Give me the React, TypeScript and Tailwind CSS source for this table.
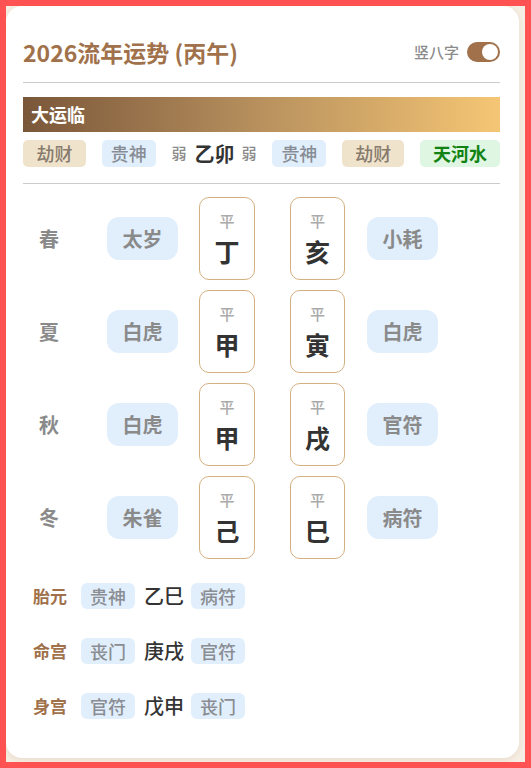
import React from "react";

const F = { fontFamily: '"Noto Sans CJK SC", "Noto Sans", sans-serif' };

function Card({ ch }: { ch: string }) {
  return (
    <div className="flex h-[83px] flex-col items-center rounded-[10px] border border-[#d3b07f] bg-white pt-[13px]">
      <div className="text-[15px] leading-[20px] font-medium text-[#aaaaaa]">平</div>
      <div className="mt-[5px] text-[25px] leading-[30px] font-bold text-[#333333]">{ch}</div>
    </div>
  );
}

function STag({ t }: { t: string }) {
  return (
    <div className="flex h-[43px] w-[71px] items-center justify-center rounded-[12px] bg-[#e1effd] text-[20px] font-bold text-[#8a8a8a]">
      {t}
    </div>
  );
}

function BTag({ t }: { t: string }) {
  return (
    <div className="flex h-[26px] w-[54px] items-center justify-center rounded-[6px] bg-[#e1effd] text-[18px] font-medium text-[#8a8d92]">
      {t}
    </div>
  );
}

export default function App() {
  const seasons = [
    ["春", "太岁", "丁", "亥", "小耗"],
    ["夏", "白虎", "甲", "寅", "白虎"],
    ["秋", "白虎", "甲", "戌", "官符"],
    ["冬", "朱雀", "己", "巳", "病符"],
  ];
  const bottom = [
    ["胎元", "贵神", "乙巳", "病符"],
    ["命宫", "丧门", "庚戌", "官符"],
    ["身宫", "官符", "戊申", "丧门"],
  ];
  return (
    <div style={F} className="h-[768px] w-full border-[6px] border-[#ff5252] bg-[#f6eee4]">
      <div className="mr-[6px] h-[752px] rounded-[16px] bg-white pl-[17px] pr-[19px] pt-[30px] shadow-[0_2px_6px_rgba(160,120,70,0.15)]">
        {/* header */}
        <div className="flex h-[32px] items-center justify-between">
          <div className="text-[23px] leading-[32px] font-bold text-[#a0714a]">2026流年运势 (丙午)</div>
          <div className="flex items-center">
            <span className="text-[15px] font-medium text-[#8a8a8a]">竖八字</span>
            <div className="ml-[8px] flex h-[20px] w-[33px] items-center justify-end rounded-full bg-[#a0714a] pr-[2px]">
              <div className="h-[16px] w-[16px] rounded-full bg-white" />
            </div>
          </div>
        </div>
        <div className="mt-[14px] h-px bg-[#cccccc]" />
        {/* gradient bar */}
        <div className="mt-[14px] flex h-[35px] items-center bg-gradient-to-r from-[#7a573a] via-[#b8915e] to-[#f5c674] pl-[8px] text-[18px] font-bold text-white">
          大运临
        </div>
        {/* tag row */}
        <div className="mt-[8px] flex h-[27px] items-center justify-between">
          <div className="flex h-[27px] w-[63px] items-center justify-center rounded-[5px] bg-[#f0e3cb] text-[18px] font-medium text-[#877b6e]">劫财</div>
          <div className="flex h-[27px] w-[54px] items-center justify-center rounded-[5px] bg-[#e1effd] text-[18px] font-medium text-[#888d95]">贵神</div>
          <div className="flex items-center">
            <span className="text-[15px] font-medium text-[#8a8a8a]">弱</span>
            <span className="ml-[8px] text-[20px] font-bold text-[#333333]">乙卯</span>
            <span className="ml-[7px] text-[15px] font-medium text-[#8a8a8a]">弱</span>
          </div>
          <div className="flex h-[27px] w-[54px] items-center justify-center rounded-[5px] bg-[#e1effd] text-[18px] font-medium text-[#888d95]">贵神</div>
          <div className="flex h-[27px] w-[62px] items-center justify-center rounded-[5px] bg-[#f0e3cb] text-[18px] font-medium text-[#877b6e]">劫财</div>
          <div className="flex h-[27px] w-[80px] items-center justify-center rounded-[5px] bg-[#dff6e2] text-[18px] font-bold text-[#128212]">天河水</div>
        </div>
        <div className="mt-[16px] h-px bg-[#cccccc]" />
        {/* seasons */}
        <div className="mt-[13px] flex flex-col gap-[10px]">
          {seasons.map((s) => (
            <div key={s[0] + s[1] + s[2]} className="flex h-[83px] items-center">
              <div className="ml-[16px] w-[20px] text-[20px] font-bold text-[#8a8a8a]">{s[0]}</div>
              <div className="ml-[48px]"><STag t={s[1]} /></div>
              <div className="ml-[21px] w-[56px]"><Card ch={s[2]} /></div>
              <div className="ml-[35px] w-[55px]"><Card ch={s[3]} /></div>
              <div className="ml-[22px]"><STag t={s[4]} /></div>
            </div>
          ))}
        </div>
        {/* bottom */}
        <div className="mt-[24px] flex flex-col gap-[29px]">
          {bottom.map((b) => (
            <div key={b[0]} className="flex h-[26px] items-center">
              <div className="ml-[10px] w-[34px] text-[17px] font-bold text-[#a0714a]">{b[0]}</div>
              <div className="ml-[14px]"><BTag t={b[1]} /></div>
              <div className="ml-[9px] text-[20px] font-medium text-[#333333]">{b[2]}</div>
              <div className="ml-[7px]"><BTag t={b[3]} /></div>
            </div>
          ))}
        </div>
      </div>
    </div>
  );
}
